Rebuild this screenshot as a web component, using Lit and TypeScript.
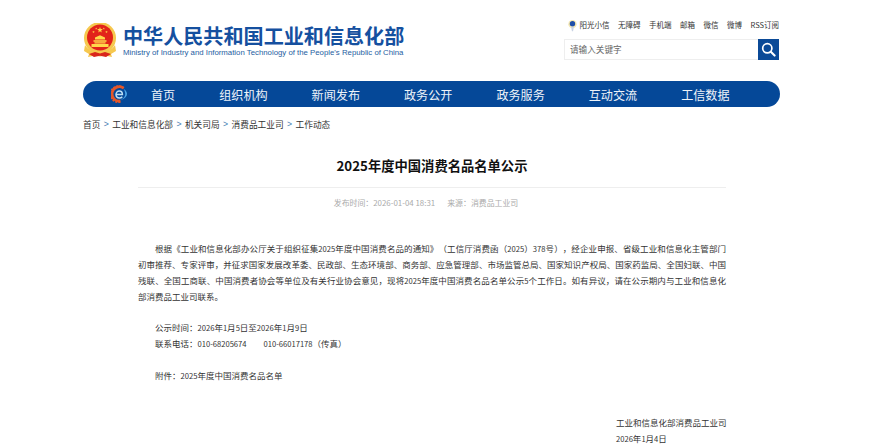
import { LitElement, html, css, svg } from "lit";
import { customElement } from "lit/decorators.js";

const star = (cx: number, cy: number, r: number) => {
  const pts: string[] = [];
  for (let i = 0; i < 10; i++) {
    const a = -Math.PI / 2 + (i * Math.PI) / 5;
    const q = i % 2 ? r * 0.42 : r;
    pts.push(`${(cx + q * Math.cos(a)).toFixed(2)},${(cy + q * Math.sin(a)).toFixed(2)}`);
  }
  return svg`<polygon points=${pts.join(" ")} fill="#ffd84a"></polygon>`;
};

@customElement("app-root")
export class AppRoot extends LitElement {
  static styles = css`
    :host { display: block; background: #fff; font-family: "Noto Sans CJK SC", "Liberation Sans", sans-serif; text-spacing-trim: space-all; }
    .page { width: 697px; margin-left: 83px; height: 446px; overflow: hidden; }
    .head { display: flex; justify-content: space-between; height: 81px; }
    .brand { display: flex; gap: 6px; padding-top: 23px; align-items: flex-start; }
    .emblem { width: 34px; height: 36px; flex: none; }
    .names { display: flex; flex-direction: column; }
    .cn { font-size: 20.1px; line-height: 24px; font-weight: 700; color: #15509f; white-space: nowrap; margin-top: 1px; }
    .en { font-size: 7.8px; line-height: 9px; color: #25609f; white-space: nowrap; font-family: "Liberation Sans", sans-serif; }
    .tools { width: 216px; padding: 19px 1px 0 0; box-sizing: border-box; display: flex; flex-direction: column; gap: 8px; }
    .links { display: flex; justify-content: flex-end; align-items: center; gap: 8.5px; height: 12px; font-size: 7.5px; line-height: 12px; color: #333; white-space: nowrap; }
    .links .sun { display: flex; gap: 3px; align-items: center; }
    .search { display: flex; height: 21px; box-sizing: border-box; border: 1px solid #eee; border-right: none; }
    .search .ph { flex: 1; font-size: 8.6px; line-height: 19px; color: #666; padding-left: 5px; }
    .search .btn { width: 21px; height: 21px; margin-top: -1px; background: #0b4a97; display: flex; align-items: center; justify-content: center; }
    nav { height: 26px; border-radius: 13px; background: #054898; display: flex; align-items: center; padding-left: 28px; color: #eef3f9; font-size: 12.1px; white-space: nowrap; }
    nav .gear { width: 17px; height: 18px; margin-right: 23px; flex: none; }
    nav .item { margin-right: 44px; }
    .crumbs { margin-top: 11px; font-size: 8.7px; line-height: 13px; color: #333; white-space: nowrap; display: flex; gap: 3.4px; }
    .crumbs i { font-style: normal; color: #4a7fb5; font-family: "Liberation Sans", sans-serif; }
    article { width: 588px; margin: 0 0 0 55px; }
    h1 { margin: 25px 0 0; font-size: 13.3px; line-height: 20px; font-weight: 700; color: #111; text-align: center; }
    .rule { height: 1px; background: #eee; margin-top: 11px; }
    .meta { margin-top: 9px; padding-right: 12px; font-size: 7.9px; line-height: 12px; color: #aaa; display: flex; justify-content: center; gap: 12px; }
    .body { margin-top: 31px; font-size: 8.5px; line-height: 16px; color: #333; }
    .body p { margin: 0; }
    .para { text-indent: 17px; text-align: justify; }
    .plain { padding-left: 17px; }
    .gap1 { margin-top: 15px !important; }
    .gap2 { margin-top: 16px !important; }
    .num { font-size: 7.6px; line-height: 0; }
    .sign { margin-top: 31px; padding-left: 478px; white-space: nowrap; font-size: 8.5px; line-height: 16px; color: #333; }
  `;

  render() {
    const tools = ["无障碍", "手机端", "邮箱", "微信", "微博", "RSS订阅"];
    const navs = ["首页", "组织机构", "新闻发布", "政务公开", "政务服务", "互动交流", "工信数据"];
    const crumbs = ["首页", "工业和信息化部", "机关司局", "消费品工业司", "工作动态"];
    return html`
      <div class="page">
        <header class="head">
          <div class="brand">
            <svg class="emblem" viewBox="0 0 34 36">
              <circle cx="17" cy="15" r="16" fill="#f6c84e"></circle>
              <circle cx="17" cy="14.5" r="13" fill="#e2231a"></circle>
              ${star(17, 7, 3)}${star(10.5, 9, 1.3)}${star(13.2, 5.6, 1.1)}${star(20.8, 5.6, 1.1)}${star(23.5, 9, 1.3)}
              <path d="M12 14.5l5-2.2 5 2.2v2H12zM10.5 17.3h13v1.4h-13zM11.5 19.2h11v1.3h-11zM8.5 21h17v3h-17z" fill="#ffd84a"></path>
              <path d="M2 22c3 5 8.5 7.5 15 7.5S29 27 32 22l1 6-5 3 1 3-7-1.5-5 1-5-1L5 34l1-3-5-3z" fill="#f6c84e"></path>
              <path d="M6 31l6-2 5 1.6 5-1.6 6 2-5 3-6-1.2-6 1.2z" fill="#d9261c"></path>
            </svg>
            <div class="names">
              <div class="cn">中华人民共和国工业和信息化部</div>
              <div class="en">Ministry of Industry and Information Technology of the People's Republic of China</div>
            </div>
          </div>
          <div class="tools">
            <div class="links">
              <span class="sun">
                <svg width="9" height="13" viewBox="0 0 10 13">
                  <circle cx="5" cy="5" r="4.6" fill="#f4e6b0"></circle>
                  <circle cx="5" cy="4.6" r="3" fill="#1f4fa8"></circle>
                  <path d="M3.4 8h3.2L5.6 13H4.4z" fill="#c9d3e4"></path>
                </svg>
                阳光小信
              </span>
              ${tools.map((t) => html`<span>${t}</span>`)}
            </div>
            <div class="search">
              <div class="ph">请输入关键字</div>
              <div class="btn">
                <svg width="15" height="15" viewBox="0 0 15 15" fill="none" stroke="#fff">
                  <circle cx="6.3" cy="6.3" r="4.6" stroke-width="1.7"></circle>
                  <path d="M9.8 9.8l3.8 3.8" stroke-width="2.1" stroke-linecap="round"></path>
                </svg>
              </div>
            </div>
          </div>
        </header>
        <nav>
          <svg class="gear" viewBox="0 0 17 18">
            <path d="M12.6 3.2A7.200 7.200 0 1 0 9.500 16" fill="none" stroke="#e4572a" stroke-width="2.800"></path>
            <path d="M12.600 3.200A7.900 7.900 0 1 0 9.500 16.800" fill="none" stroke="#e4572a" stroke-width="2" stroke-dasharray="1.800 1.200"></path>
            <path d="M5 9.600h6.400c0-2.300-1.500-3.600-3.100-3.600S5 7.400 5 9.600c0 2.200 1.700 3.400 3.400 3.400 1.100 0 2.100-.4 2.900-1.300" fill="none" stroke="#bfe0f5" stroke-width="1.500"></path>
            <path d="M12.500 3.800c3 1.800 4.200 4.400 3.200 6.800-.9 2.200-3.200 3.800-6 4.300 2.800-1.400 4.300-3.300 4.500-5.400.1-2-.6-4-1.700-5.700z" fill="#4aa3e6"></path>
          </svg>
          ${navs.map((n) => html`<span class="item">${n}</span>`)}
        </nav>
        <div class="crumbs">
          ${crumbs.map((c, i) => html`${i ? html`<i>&gt;</i>` : ""}<span>${c}</span>`)}
        </div>
        <article>
          <h1>2025年度中国消费名品名单公示</h1>
          <div class="rule"></div>
          <div class="meta"><span>发布时间：2026-01-04 18:31</span><span>来源：消费品工业司</span></div>
          <div class="body">
            <p class="para">根据《工业和信息化部办公厅关于组织征集<span class="num">2025</span>年度中国消费名品的通知》（工信厅消费函（<span class="num">2025</span>）<span class="num">378</span>号），经企业申报、省级工业和信息化主管部门初审推荐、专家评审，并征求国家发展改革委、民政部、生态环境部、商务部、应急管理部、市场监管总局、国家知识产权局、国家药监局、全国妇联、中国残联、全国工商联、中国消费者协会等单位及有关行业协会意见，现将<span class="num">2025</span>年度中国消费名品名单公示<span class="num">5</span>个工作日。如有异议，请在公示期内与工业和信息化部消费品工业司联系。</p>
            <p class="plain gap1">公示时间：<span class="num">2026</span>年<span class="num">1</span>月<span class="num">5</span>日至<span class="num">2026</span>年<span class="num">1</span>月<span class="num">9</span>日</p>
            <p class="plain">联系电话：<span class="num">010-68205674</span>　　<span class="num">010-66017178</span>（传真）</p>
            <p class="plain gap2">附件：<span class="num">2025</span>年度中国消费名品名单</p>
          </div>
          <div class="sign">
            <div>工业和信息化部消费品工业司</div>
            <div><span class="num">2026</span>年<span class="num">1</span>月<span class="num">4</span>日</div>
          </div>
        </article>
      </div>
    `;
  }
}
